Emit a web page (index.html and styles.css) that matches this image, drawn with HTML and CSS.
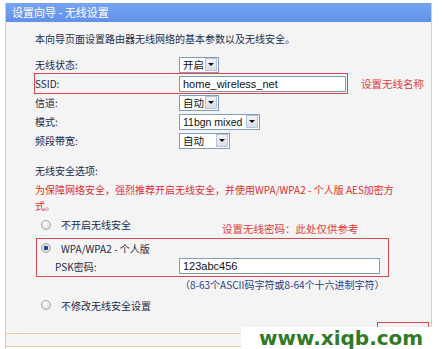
FILE: index.html
```html
<!DOCTYPE html>
<html lang="zh">

<head>
    <meta charset="utf-8">
    <meta name="viewport" content="width=device-width, initial-scale=1.0">
    <title>设置向导 - 无线设置</title>
    <link rel="stylesheet" href="styles.css">
</head>

<body>
    <div class="vindue">
        <div class="titel">设置向导 - 无线设置</div>

        <div class="indhold">
            <p class="intro">本向导页面设置路由器无线网络的基本参数以及无线安全。</p>

            <div class="felter">
                <div class="raekke">
                    <span class="lbl">无线状态:</span>
                    <span class="sel w39"><span class="val">开启</span><span class="pil"></span></span>
                </div>
                <div class="raekke">
                    <div class="markeret">
                        <span class="lbl">SSID:</span>
                        <span class="inp w166">home_wireless_net</span>
                    </div>
                    <span class="note ssid-note">设置无线名称</span>
                </div>
                <div class="raekke">
                    <span class="lbl">信道:</span>
                    <span class="sel w39"><span class="val">自动</span><span class="pil"></span></span>
                </div>
                <div class="raekke">
                    <span class="lbl">模式:</span>
                    <span class="sel w80"><span class="val latin">11bgn mixed</span><span class="pil"></span></span>
                </div>
                <div class="raekke">
                    <span class="lbl">频段带宽:</span>
                    <span class="sel w50"><span class="val">自动</span><span class="pil"></span></span>
                </div>
            </div>

            <p class="sektion">无线安全选项:</p>
            <p class="advarsel">为保障网络安全，强烈推荐开启无线安全，并使用WPA/WPA2 - 个人版 AES加密方<br>式。</p>

            <div class="valg valg-1">
                <span class="radio"></span>
                <span class="valg-tekst">不开启无线安全</span>
                <span class="note kode-note">设置无线密码：此处仅供参考</span>
            </div>

            <div class="rammeboks">
                <div class="valg">
                    <span class="radio valgt"></span>
                    <span class="valg-tekst">WPA/WPA2 - 个人版</span>
                </div>
                <div class="psk">
                    <span class="psk-lbl">PSK密码:</span>
                    <span class="inp w200">123abc456</span>
                </div>
            </div>
            <p class="hint">（8-63个ASCII码字符或8-64个十六进制字符）</p>

            <div class="valg valg-3">
                <span class="radio"></span>
                <span class="valg-tekst">不修改无线安全设置</span>
            </div>
        </div>

        <div class="bund"></div>

        <div class="knap-ramme"></div>
        <div class="vandmaerke">www.xiqb.com</div>
    </div>
</body>

</html>
```

FILE: styles.css
```css
body {
    margin: 0;
    background: #fff;
    font-family: "Noto Sans CJK SC", "Liberation Sans", sans-serif;
    font-size: 10px;
    color: #1e2a4a;
}

.vindue {
    position: relative;
    width: 425px;
    height: 346px;
    margin: 3px 0 0 5px;
    border-left: 1px solid #f0c8a0;
    border-right: 1px solid #f0c8a0;
}

.titel {
    height: 19px;
    line-height: 19px;
    padding-left: 6px;
    background: linear-gradient(#78a4f2, #6090ea);
    color: #fff;
    font-size: 11px;
}

.indhold {
    background: #f4f4f4;
    padding: 9px 0 20px 29px;
}

p {
    margin: 0;
    line-height: 16px;
}

.felter {
    margin-top: 8px;
}

.raekke {
    display: flex;
    align-items: center;
    height: 19px;
}

.lbl {
    width: 144px;
    flex: none;
}

.markeret {
    display: flex;
    align-items: center;
    width: 312px;
    height: 19px;
    outline: 1px solid #dc4848;
}

.note {
    color: #e23c3c;
    font-size: 10.5px;
}

.ssid-note {
    margin-left: 14px;
}

/* selects og inputs */
.sel {
    display: flex;
    align-items: center;
    height: 16px;
    box-sizing: border-box;
    border: 1px solid #7f9db9;
    background: #fff;
}

.val {
    flex: 1;
    padding-left: 3px;
    font-size: 10.5px;
    color: #111;
}

.latin {
    font-family: "Liberation Sans", sans-serif;
    font-size: 10.5px;
}

.pil {
    position: relative;
    width: 10px;
    height: 11px;
    margin-right: 1px;
    border: 1px solid #b6c2d8;
    background: linear-gradient(#f2f4f8, #d8dde8);
}

.pil::after {
    content: "";
    position: absolute;
    left: 2px;
    top: 4px;
    border-left: 3px solid transparent;
    border-right: 3px solid transparent;
    border-top: 3px solid #111;
}

.w39 { width: 40px; }
.w50 { width: 51px; }
.w80 { width: 81px; }

.inp {
    display: flex;
    align-items: center;
    height: 16px;
    box-sizing: border-box;
    border: 1px solid #7f9db9;
    background: #fff;
    padding-left: 3px;
    font-family: "Liberation Sans", sans-serif;
    font-size: 11px;
    color: #111;
}

.w166 { width: 167px; }
.w200 { width: 201px; }

/* sikkerhed */
.sektion {
    margin-top: 13px;
}

.advarsel {
    margin-top: 3px;
    color: #e22e2e;
}

.valg {
    display: flex;
    align-items: center;
    height: 16px;
}

.valg-1 {
    margin-top: 3px;
    height: 20px;
    align-items: flex-start;
}

.valg-1 .radio {
    margin-top: 3px;
}

.valg-1 .valg-tekst {
    line-height: 16px;
    width: 161px;
}

.kode-note {
    padding-top: 4px;
    line-height: 16px;
}

.radio {
    flex: none;
    width: 8px;
    height: 8px;
    margin: 0 10px 0 6px;
    border: 1px solid #a4a4a4;
    border-radius: 50%;
    background: radial-gradient(circle at 40% 35%, #fff, #d6d6d6);
}

.radio.valgt {
    margin-left: 4px;
    background: radial-gradient(circle, #28447e 0, #28447e 2px, #e8e8e8 2.6px, #c8c8c8);
}

.rammeboks {
    width: 351px;
    margin: 1px 0 0 1px;
    padding-top: 1px;
    padding-bottom: 2px;
    border: 1px solid #d84a4a;
}

.psk {
    display: flex;
    align-items: center;
    height: 16px;
    margin-top: 2px;
    padding-left: 18px;
}

.psk-lbl {
    width: 124px;
}

.hint {
    padding-left: 145px;
    color: #2e3c86;
}

.valg-3 {
    margin-top: 4px;
}

.bund {
    height: 12px;
    background: #f4f4f4;
    border-top: 1px solid #f0c8a0;
    border-bottom: 1px solid #f0c8a0;
}

/* markering omkring knap og vandmaerke ligger ovenpaa */
.knap-ramme {
    position: absolute;
    left: 371px;
    top: 319px;
    width: 50px;
    height: 30px;
    border: 1px solid #d84a4a;
}

.vandmaerke {
    position: absolute;
    left: 235px;
    top: 324px;
    width: 202px;
    height: 22px;
    background: #fff;
    padding-left: 18px;
    box-sizing: border-box;
    font-family: "DejaVu Sans", sans-serif;
    font-weight: bold;
    font-size: 20px;
    line-height: 22px;
    color: #2f7a26;
}
```
